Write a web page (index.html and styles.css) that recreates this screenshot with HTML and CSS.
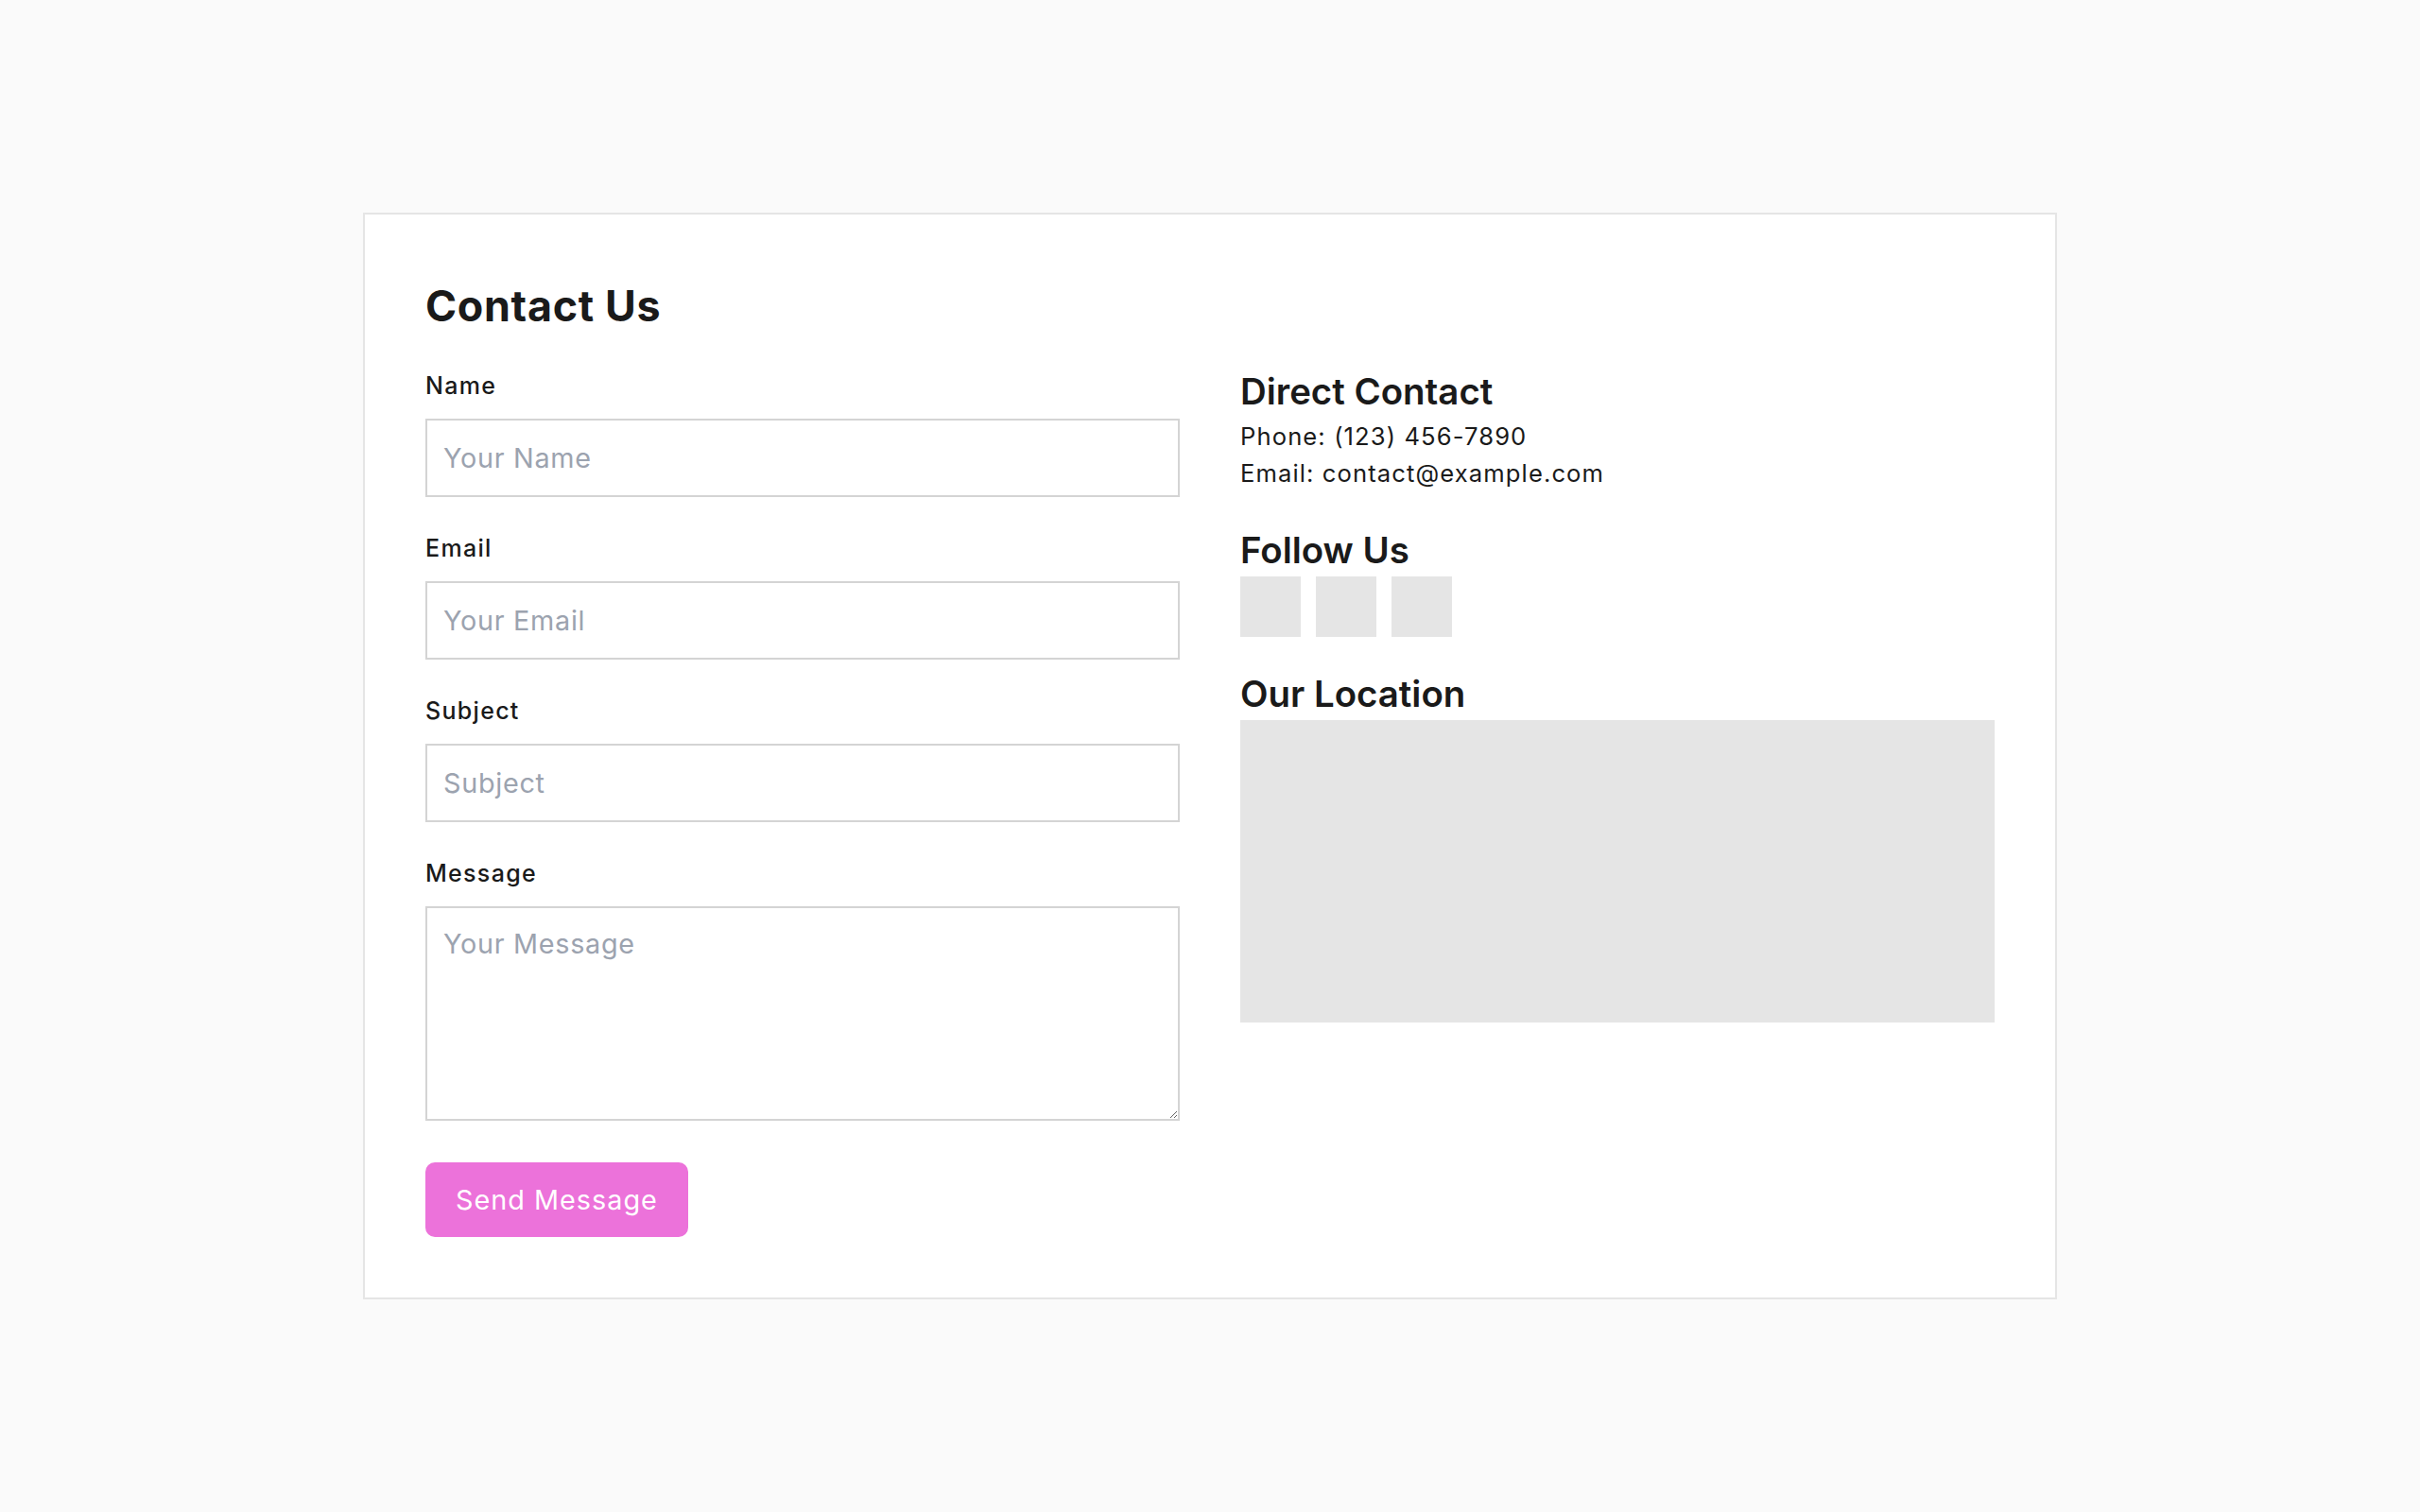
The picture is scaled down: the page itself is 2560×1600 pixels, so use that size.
FILE: index.html
```html
<!DOCTYPE html>
<html lang="en">
<head>
<meta charset="utf-8">
<title>Contact Us</title>
<link rel="stylesheet" href="styles.css">
</head>
<body>
  <main class="page">
    <section class="card">
      <h1 class="card-title">Contact Us</h1>
      <div class="layout">
        <form class="contact-form" onsubmit="return false;">
          <div class="field">
            <label class="field-label" for="name">Name</label>
            <input class="field-input" id="name" type="text" placeholder="Your Name">
          </div>
          <div class="field">
            <label class="field-label" for="email">Email</label>
            <input class="field-input" id="email" type="email" placeholder="Your Email">
          </div>
          <div class="field">
            <label class="field-label" for="subject">Subject</label>
            <input class="field-input" id="subject" type="text" placeholder="Subject">
          </div>
          <div class="field">
            <label class="field-label" for="message">Message</label>
            <textarea class="field-input field-textarea" id="message" placeholder="Your Message"></textarea>
          </div>
          <button class="submit-btn" type="submit">Send Message</button>
        </form>

        <aside class="info">
          <div class="info-block info-contact">
            <h3 class="info-heading">Direct Contact</h3>
            <p class="info-line">Phone: (123) 456-7890</p>
            <p class="info-line">Email: contact@example.com</p>
          </div>
          <div class="info-block info-social">
            <h3 class="info-heading">Follow Us</h3>
            <div class="social-list">
              <a class="social-item" href="#" aria-label="Social link 1"></a>
              <a class="social-item" href="#" aria-label="Social link 2"></a>
              <a class="social-item" href="#" aria-label="Social link 3"></a>
            </div>
          </div>
          <div class="info-block info-map">
            <h3 class="info-heading">Our Location</h3>
            <div class="map-box"></div>
          </div>
        </aside>
      </div>
    </section>
  </main>
</body>
</html>
```
FILE: styles.css
```css
* {
  box-sizing: border-box;
}

html, body {
  margin: 0;
  padding: 0;
}

body {
  background: #fafafa;
  color: #1a1a1a;
  font-family: Inter, "Noto Sans", "Liberation Sans", sans-serif;
  font-size: 25.6px;
  line-height: 1.5;
}

.page {
  min-height: 100vh;
  display: flex;
  align-items: center;
  justify-content: center;
}

.card {
  width: 1792px;
  background: #ffffff;
  border: 2px solid #e5e5e5;
  padding: 64px;
}

.card-title {
  margin: 0 0 32px;
  font-size: 44.8px;
  line-height: 67px;
  font-weight: 700;
  letter-spacing: 0.7px;
}

.layout {
  display: grid;
  grid-template-columns: 1fr 1fr;
  column-gap: 64px;
  align-items: start;
}

/* form column */
.contact-form {
  display: flex;
  flex-direction: column;
  align-items: flex-start;
}

.field {
  width: 100%;
  margin-bottom: 36px;
}

.field-label {
  display: block;
  margin-bottom: 17px;
  font-size: 25px;
  line-height: 36px;
  font-weight: 500;
  letter-spacing: 1.3px;
}

.field-input {
  display: block;
  width: 100%;
  height: 83px;
  margin: 0;
  padding: 0 17px;
  border: 2px solid #d4d4d4;
  border-radius: 0;
  background: #ffffff;
  color: #1a1a1a;
  font-family: inherit;
  font-size: 28.8px;
  line-height: 43px;
  letter-spacing: 0.7px;
  outline: none;
}

.field-input::placeholder {
  color: #9ca3af;
  opacity: 1;
}

.field-textarea {
  height: 227px;
  padding: 16px 17px;
  resize: vertical;
}

.submit-btn {
  margin-top: 8px;
  padding: 18px 32px;
  border: 0;
  border-radius: 10px;
  background: #ec72da;
  color: #ffffff;
  font-family: inherit;
  font-size: 28.8px;
  line-height: 43px;
  font-weight: 400;
  letter-spacing: 1px;
  cursor: pointer;
}

/* info column */
.info {
  display: flex;
  flex-direction: column;
}

.info-heading {
  margin: 0 0 4px;
  font-size: 38.4px;
  line-height: 48px;
  font-weight: 600;
}

.info-line {
  margin: 0;
  font-size: 25.6px;
  line-height: 39px;
  letter-spacing: 1.1px;
}

.info-contact {
  margin-bottom: 38px;
}

.info-social {
  margin-bottom: 36px;
}

.social-list {
  display: flex;
  gap: 16px;
}

.social-item {
  display: block;
  width: 64px;
  height: 64px;
  background: #e5e5e5;
}

.map-box {
  height: 320px;
  background: #e5e5e5;
}
```
